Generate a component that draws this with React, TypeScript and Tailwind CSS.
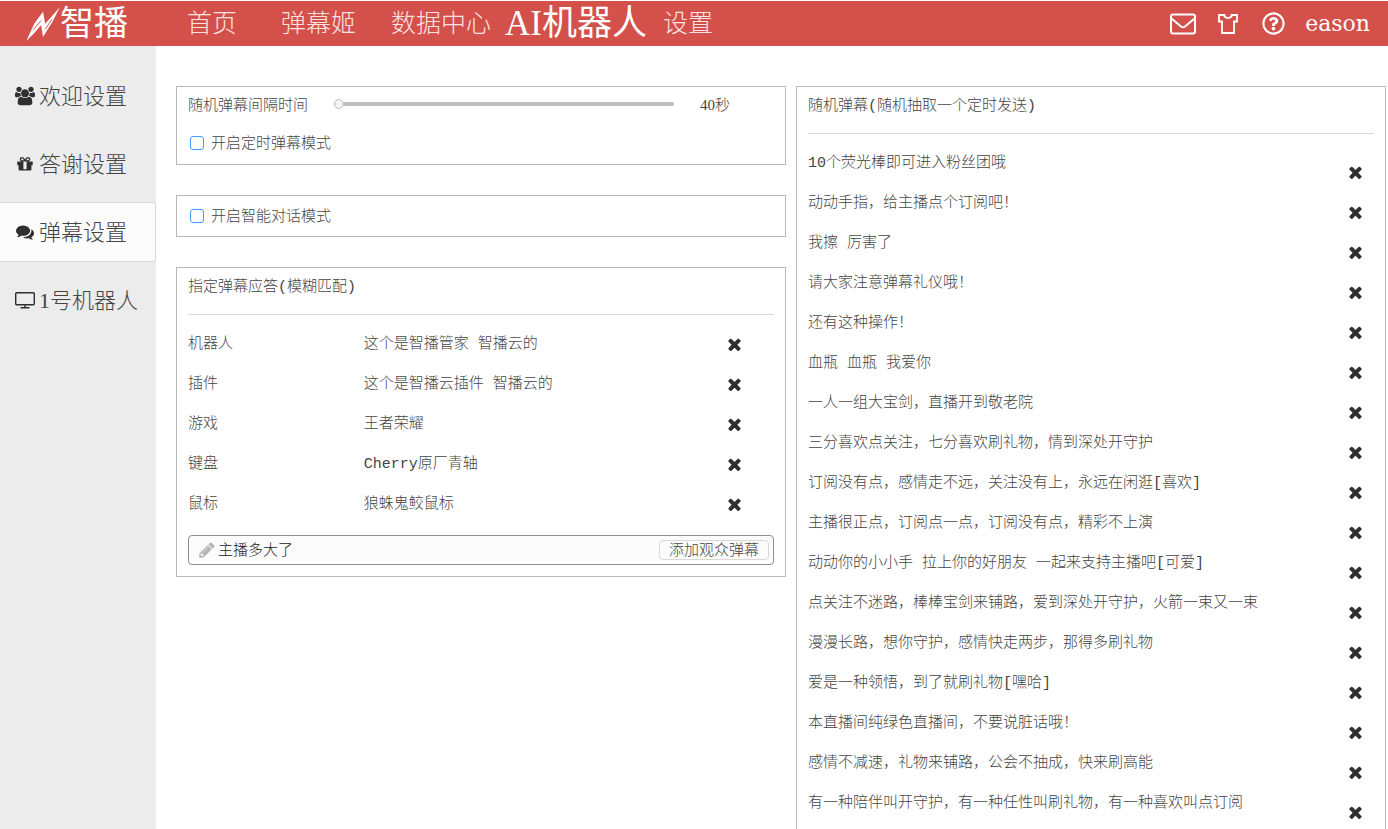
import React, { useState } from 'react';
import { FaRegQuestionCircle } from 'react-icons/fa';

type IconProps = { className?: string };

const UsersIcon = ({ className }: IconProps) => (
  <svg viewBox="-64 0 1920 1792" fill="currentColor" className={className} aria-hidden="true">
    <path d="M529 896q-162 5-265 128h-134q-82 0-138-40.500t-56-118.500q0-353 124-353 6 0 43.500 21t97.500 42.500 119 21.500q67 0 133-23-5 37-5 66 0 139 81 256zm1071 637q0 120-73 189.500t-194 69.500h-874q-121 0-194-69.500t-73-189.500q0-53 3.500-103.500t14-109 26.500-108.500 43-97.500 62-81 85.500-53.500 111.500-20q10 0 43 21.500t73 48 107 48 135 21.500 135-21.500 107-48 73-48 43-21.500q61 0 111.500 20t85.500 53.500 62 81 43 97.500 26.500 108.500 14 109 3.500 103.500zm-1024-1277q0 106-75 181t-181 75-181-75-75-181 75-181 181-75 181 75 75 181zm704 384q0 159-112.500 271.500t-271.500 112.500-271.500-112.500-112.500-271.500 112.500-271.500 271.500-112.500 271.500 112.500 112.500 271.500zm576 225q0 78-56 118.500t-138 40.500h-134q-103-123-265-128 81-117 81-256 0-29-5-66 66 23 133 23 59 0 119-21.500t97.500-42.500 43.500-21q124 0 124 353zm-128-609q0 106-75 181t-181 75-181-75-75-181 75-181 181-75 181 75 75 181z" />
  </svg>
);

const GiftIcon = ({ className }: IconProps) => (
  <svg viewBox="0 0 1792 1792" fill="currentColor" className={className} aria-hidden="true">
    <path d="M1056 1356v-716h-320v716q0 25 18 38.500t46 13.500h192q28 0 46-13.500t18-38.500zm-456-844h195l-126-161q-26-31-69-31-40 0-68 28t-28 68 28 68 68 28zm688-96q0-40-28-68t-68-28q-43 0-69 31l-125 161h194q40 0 68-28t28-68zm376 256v320q0 14-9 23t-23 9h-96v416q0 40-28 68t-68 28h-1088q-40 0-68-28t-28-68v-416h-96q-14 0-23-9t-9-23v-320q0-14 9-23t23-9h440q-93 0-158.500-65.500t-65.500-158.500 65.500-158.500 158.500-65.500q107 0 168 77l128 165 128-165q61-77 168-77 93 0 158.500 65.500t65.500 158.500-65.500 158.500-158.500 65.500h440q14 0 23 9t9 23z" />
  </svg>
);

const CommentsIcon = ({ className }: IconProps) => (
  <svg viewBox="0 0 1792 1792" fill="currentColor" className={className} aria-hidden="true">
    <path d="M1408 768q0 139-94 257t-256.500 186.500-353.500 68.500q-86 0-176-16-124 88-278 128-36 9-86 16h-3q-11 0-20.500-8t-11.500-21q-1-3-1-6.500t.5-6.500 2-6l2.500-5 3.500-5.500 4-5 4.500-5 4-4.500q5-6 23-25t26-29.500 22.500-29 25-38.500 20.500-44q-124-72-195-177t-71-224q0-139 94-257t256.500-186.500 353.500-68.500 353.500 68.500 256.500 186.500 94 257zm384 256q0 120-71 224.500t-195 176.500q10 24 20.500 44t25 38.500 22.500 29 26 29.500 23 25q1 1 4 4.500t4.500 5 4 5 3.500 5.500l2.500 5 2 6 .5 6.500-1 6.500q-3 14-13 22t-22 7q-50-7-86-16-154-40-278-128-90 16-176 16-271 0-472-132 58 4 88 4 161 0 309-45t264-129q125-92 192-212t67-254q0-77-23-152 129 71 204 178t75 230z" />
  </svg>
);

const MonitorIcon = ({ className }: IconProps) => (
  <svg viewBox="0 0 20 20" fill="none" stroke="currentColor" strokeWidth="1.4" className={className} aria-hidden="true">
    <rect x="0.7" y="2.7" width="18.6" height="12" rx="1" />
    <path d="M10 14.700v3M5.500 17.700h9" />
  </svg>
);

const PencilIcon = ({ className }: IconProps) => (
  <svg viewBox="0 0 1792 1792" fill="currentColor" className={className} aria-hidden="true">
    <path d="M491 1536l91-91-235-235-91 91v107h128v128h107zm523-928q0-22-22-22-10 0-17 7l-542 542q-7 7-7 17 0 22 22 22 10 0 17-7l542-542q7-7 7-17zm-54-192l416 416-832 832h-416v-416zm683 96q0 53-37 90l-166 166-416-416 166-165q36-38 90-38 53 0 91 38l235 234q37 39 37 91z" />
  </svg>
);

const TimesIcon = ({ className }: IconProps) => (
  <svg viewBox="302 302 1188 1252" fill="currentColor" className={className} aria-hidden="true">
    <path d="M1490 1322q0 40-28 68l-136 136q-28 28-68 28t-68-28l-294-294-294 294q-28 28-68 28t-68-28l-136-136q-28-28-28-68t28-68l294-294-294-294q-28-28-28-68t28-68l136-136q28-28 68-28t68 28l294 294 294-294q28-28 68-28t68 28l136 136q28 28 28 68t-28 68l-294 294 294 294q28 28 28 68z" />
  </svg>
);

const Logo = () => (
  <svg viewBox="12 12 108 110" className="w-[34px] h-9 shrink-0" aria-hidden="true">
    <path d="M13 121L38 66L66 28L73 66L120 13L96 60L66 108L60 70L38 96z" fill="#fff" />
    <path d="M34 86L60 56M73 84L94 52" stroke="#d4504b" strokeWidth="3" />
  </svg>
);

const navItems = [
  { label: '首页', className: 'w-[94px]' },
  { label: '弹幕姬', className: 'w-[110px]' },
  { label: '数据中心', className: 'w-[114px]' },
  { label: 'AI机器人', className: 'w-[158px]' },
  { label: '设置', className: '' },
];

const sideItems = [
  { label: '欢迎设置', Icon: UsersIcon, size: 'w-5 h-5' },
  { label: '答谢设置', Icon: GiftIcon, size: 'w-[18px] h-[18px]' },
  { label: '弹幕设置', Icon: CommentsIcon, size: 'w-[18px] h-[18px]' },
  { label: '1号机器人', Icon: MonitorIcon, size: 'w-5 h-5' },
];

const initialReplies = [
  { keyword: '机器人', reply: '这个是智播管家 智播云的' },
  { keyword: '插件', reply: '这个是智播云插件 智播云的' },
  { keyword: '游戏', reply: '王者荣耀' },
  { keyword: '键盘', reply: 'Cherry原厂青轴' },
  { keyword: '鼠标', reply: '狼蛛鬼鲛鼠标' },
];

const initialMessages = [
  '10个荧光棒即可进入粉丝团哦',
  '动动手指，给主播点个订阅吧！',
  '我擦 厉害了',
  '请大家注意弹幕礼仪哦！',
  '还有这种操作！',
  '血瓶 血瓶 我爱你',
  '一人一组大宝剑，直播开到敬老院',
  '三分喜欢点关注，七分喜欢刷礼物，情到深处开守护',
  '订阅没有点，感情走不远，关注没有上，永远在闲逛[喜欢]',
  '主播很正点，订阅点一点，订阅没有点，精彩不上演',
  '动动你的小小手 拉上你的好朋友 一起来支持主播吧[可爱]',
  '点关注不迷路，棒棒宝剑来铺路，爱到深处开守护，火箭一束又一束',
  '漫漫长路，想你守护，感情快走两步，那得多刷礼物',
  '爱是一种领悟，到了就刷礼物[嘿哈]',
  '本直播间纯绿色直播间，不要说脏话哦！',
  '感情不减速，礼物来铺路，公会不抽成，快来刷高能',
  '有一种陪伴叫开守护，有一种任性叫刷礼物，有一种喜欢叫点订阅',
];

const Checkbox = ({ label }: { label: string }) => (
  <label className="flex items-center gap-[7px] h-5">
    <input
      type="checkbox"
      className="appearance-none w-[14px] h-[14px] ml-[2px] rounded-[3px] border border-[#409eff] bg-white checked:bg-[#409eff]"
    />
    <span className="pt-1">{label}</span>
  </label>
);

const App: React.FC = () => {
  const [activeNav, setActiveNav] = useState('AI机器人');
  const [activeSide, setActiveSide] = useState('弹幕设置');
  const [seconds, setSeconds] = useState(40);
  const [replies, setReplies] = useState(initialReplies);
  const [messages, setMessages] = useState(initialMessages);
  const [draft, setDraft] = useState('主播多大了');

  const addReply = () => {
    if (!draft) return;
    setReplies(prev => [...prev, { keyword: draft, reply: '' }]);
    setDraft('');
  };

  return (
    <div className="h-screen flex flex-col overflow-hidden bg-white font-light text-[#444] font-['Liberation_Serif','Noto_Sans_CJK_SC',serif]">
      {/* Header */}
      <header className="flex items-center h-[46px] shrink-0 border-t border-white bg-[#d4504b] text-white">
        <h1 className="flex items-center w-[187px] pl-[26px] text-[34px] leading-[44px] font-normal whitespace-nowrap">
          <Logo />
          <span>智播</span>
        </h1>
        <nav className="flex items-center flex-1 whitespace-nowrap">
          {navItems.map(item => (
            <div key={item.label} className={item.className}>
              <button
                onClick={() => setActiveNav(item.label)}
                className={`leading-[44px] ${activeNav === item.label ? 'text-[35px] font-normal' : 'text-[25px] text-[#fbe3e2]'}`}
              >
                {item.label}
              </button>
            </div>
          ))}
        </nav>
        <div className="flex items-center pr-[18px] whitespace-nowrap">
          <button aria-label="消息" className="w-[26px] mr-[22px]">
            <svg viewBox="0 0 26 22" fill="none" stroke="currentColor" strokeWidth="2" className="w-[26px] h-[22px]">
              <rect x="1" y="1.500" width="24" height="19" rx="2" />
              <path d="M1.500 5.500l9.500 8q2 1.500 4 0l9.500-8" />
            </svg>
          </button>
          <button aria-label="皮肤" className="w-5 mr-[24px]">
            <svg viewBox="0 0 20 20" fill="none" stroke="currentColor" strokeWidth="1.8" className="w-5 h-5">
              <path d="M1 1h5.500v1.500q3.500 3 7 0V1H19v6.500h-3V19H4V7.500H1z" />
            </svg>
          </button>
          <button aria-label="帮助" className="mr-5">
            <FaRegQuestionCircle className="w-[23px] h-[23px]" />
          </button>
          <a href="#user" className="text-[22px] leading-[44px] font-['DejaVu_Serif',serif]">eason</a>
        </div>
      </header>

      <div className="flex flex-1 min-h-0">
        {/* Sidebar */}
        <aside className="w-[156px] shrink-0 pt-5 bg-[#ececec]">
          <nav className="flex flex-col gap-2">
            {sideItems.map(({ label, Icon, size }) => (
              <button
                key={label}
                onClick={() => setActiveSide(label)}
                className={`flex items-center gap-[3px] h-[60px] pl-[14px] text-[22px] whitespace-nowrap border-y border-r rounded-r-[3px] ${
                  activeSide === label ? 'bg-[#fcfcfc] border-[#d8d8d8]' : 'border-transparent'
                }`}
              >
                <span className="flex justify-center w-[22px]">
                  <Icon className={`${size} text-[#2f2f2f]`} />
                </span>
                {label}
              </button>
            ))}
          </nav>
        </aside>

        {/* Content */}
        <main className="flex-1 grid grid-cols-[61fr_59fr] items-start gap-[10px] pt-10 pl-5 pr-[2px] pb-5 overflow-y-auto [scrollbar-width:none] text-[15px] leading-5 font-['Liberation_Mono','Noto_Sans_CJK_SC',monospace]">
          <div className="flex flex-col gap-[30px]">
            <section className="border border-[#b9bbbb] px-[11px] pt-[10px] pb-[11px]">
              <div className="flex items-start">
                <label htmlFor="interval" className="w-[146px]">随机弹幕间隔时间</label>
                <input
                  id="interval"
                  type="range"
                  min={40}
                  max={300}
                  value={seconds}
                  onChange={e => setSeconds(Number(e.target.value))}
                  className="appearance-none w-[340px] h-1 mt-[5px] rounded-full bg-[#bbbdbf] [&::-webkit-slider-thumb]:appearance-none [&::-webkit-slider-thumb]:w-[10px] [&::-webkit-slider-thumb]:h-[10px] [&::-webkit-slider-thumb]:rounded-full [&::-webkit-slider-thumb]:border [&::-webkit-slider-thumb]:border-[#bbbdbf] [&::-webkit-slider-thumb]:bg-[#f4f4f4]"
                />
                <output htmlFor="interval" className="pl-[26px] leading-4 font-['Liberation_Serif','Noto_Sans_CJK_SC',serif]">{seconds}秒</output>
              </div>
              <div className="pt-4">
                <Checkbox label="开启定时弹幕模式" />
              </div>
            </section>

            <section className="border border-[#b9bbbb] px-[11px] py-[10px]">
              <Checkbox label="开启智能对话模式" />
            </section>

            <section className="border border-[#b9bbbb] px-[11px] pt-[10px] pb-[11px]">
              <h2 className="h-[37px] border-b border-[#d8d8d8]">指定弹幕应答(模糊匹配)</h2>
              <table className="w-full mt-2">
                <tbody>
                  {replies.map((item, i) => (
                    <tr key={item.keyword} className="h-10">
                      <td className="w-[30%] p-0 pt-1">{item.keyword}</td>
                      <td className="p-0 pt-1">{item.reply}</td>
                      <td className="w-[46px] p-0 pt-[2px]">
                        <button
                          aria-label="删除"
                          onClick={() => setReplies(prev => prev.filter((_, n) => n !== i))}
                          className="block text-[#2f2f2f]"
                        >
                          <TimesIcon className="w-[13px] h-[13px]" />
                        </button>
                      </td>
                    </tr>
                  ))}
                </tbody>
              </table>
              <div className="flex items-center h-[30px] mt-3 pl-[9px] pr-1 border border-[#8f8f8f] rounded-[4px] bg-[#fcfcfc]">
                <PencilIcon className="w-[18px] h-[18px] text-[#b5b5b5] mr-[2px]" />
                <input
                  aria-label="观众弹幕"
                  value={draft}
                  onChange={e => setDraft(e.target.value)}
                  className="flex-1 min-w-0 pt-1 outline-none bg-transparent text-[#222]"
                />
                <button onClick={addReply} className="w-[110px] h-5 border border-[#d8d8d8] rounded-[4px] leading-[22px]">
                  添加观众弹幕
                </button>
              </div>
            </section>
          </div>

          <section className="border border-[#b9bbbb] px-[11px] pt-[10px] pb-[11px]">
            <h2 className="h-[37px] border-b border-[#d8d8d8]">随机弹幕(随机抽取一个定时发送)</h2>
            <ul className="mt-2">
              {messages.map((message, i) => (
                <li key={message} className="flex justify-between h-10 pt-3 pr-3">
                  <span>{message}</span>
                  <button
                    aria-label="删除"
                    onClick={() => setMessages(prev => prev.filter((_, n) => n !== i))}
                    className="self-end mb-[3px] text-[#2f2f2f]"
                  >
                    <TimesIcon className="w-[13px] h-[13px]" />
                  </button>
                </li>
              ))}
            </ul>
          </section>
        </main>
      </div>
    </div>
  );
};

export default App;
